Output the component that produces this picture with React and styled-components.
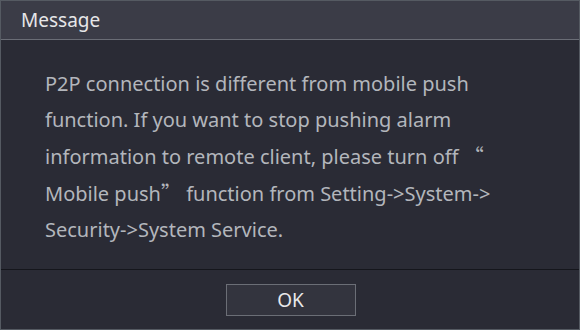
import React from "react";
import styled, { createGlobalStyle } from "styled-components";

const Global = createGlobalStyle`
  html, body { margin: 0; padding: 0; background: #2a2b35; }
  body { font-family: "Noto Sans", "Noto Sans CJK SC", sans-serif; }
`;

const Dialog = styled.div`
  width: 580px;
  height: 330px;
  box-sizing: border-box;
  border: 1px solid #555a62;
  background: #2a2b35;
  display: flex;
  flex-direction: column;
`;

const TitleBar = styled.div`
  height: 38px;
  flex: none;
  background: #3b3c47;
  border-bottom: 1px solid #6a6d76;
  display: flex;
  align-items: center;
  padding-left: 20px;
  color: #e6e6e8;
  font-size: 19px;
`;

const Body = styled.div`
  flex: 1;
  padding: 26px 0 0 44px;
  border-bottom: 1px solid #15161c;
`;

const Line = styled.div`
  color: #b3b6bc;
  font-size: 20px;
  line-height: 36px;
  white-space: nowrap;
`;

const Quote = styled.span`
  font-family: "Noto Sans CJK SC", sans-serif;
`;

const Footer = styled.div`
  height: 59px;
  flex: none;
  display: flex;
  justify-content: center;
  align-items: flex-start;
  padding-top: 14px;
  box-sizing: border-box;
`;

const Button = styled.button`
  width: 130px;
  height: 32px;
  margin-left: 1px;
  background: #33343e;
  border: 1px solid #6b6e76;
  color: #e8e8ea;
  font-family: "Noto Sans", sans-serif;
  font-size: 19px;
  padding: 0;
`;

export default function App() {
  return (
    <>
      <Global />
      <Dialog>
        <TitleBar>Message</TitleBar>
        <Body>
          <Line>P2P connection is different from mobile push</Line>
          <Line>function. If you want to stop pushing alarm</Line>
          <Line>
            information to remote client, please turn off <Quote>{"\u201c"}</Quote>
          </Line>
          <Line>
            Mobile push<Quote>{"\u201d"}</Quote> function from Setting-&gt;System-&gt;
          </Line>
          <Line>Security-&gt;System Service.</Line>
        </Body>
        <Footer>
          <Button>OK</Button>
        </Footer>
      </Dialog>
    </>
  );
}
